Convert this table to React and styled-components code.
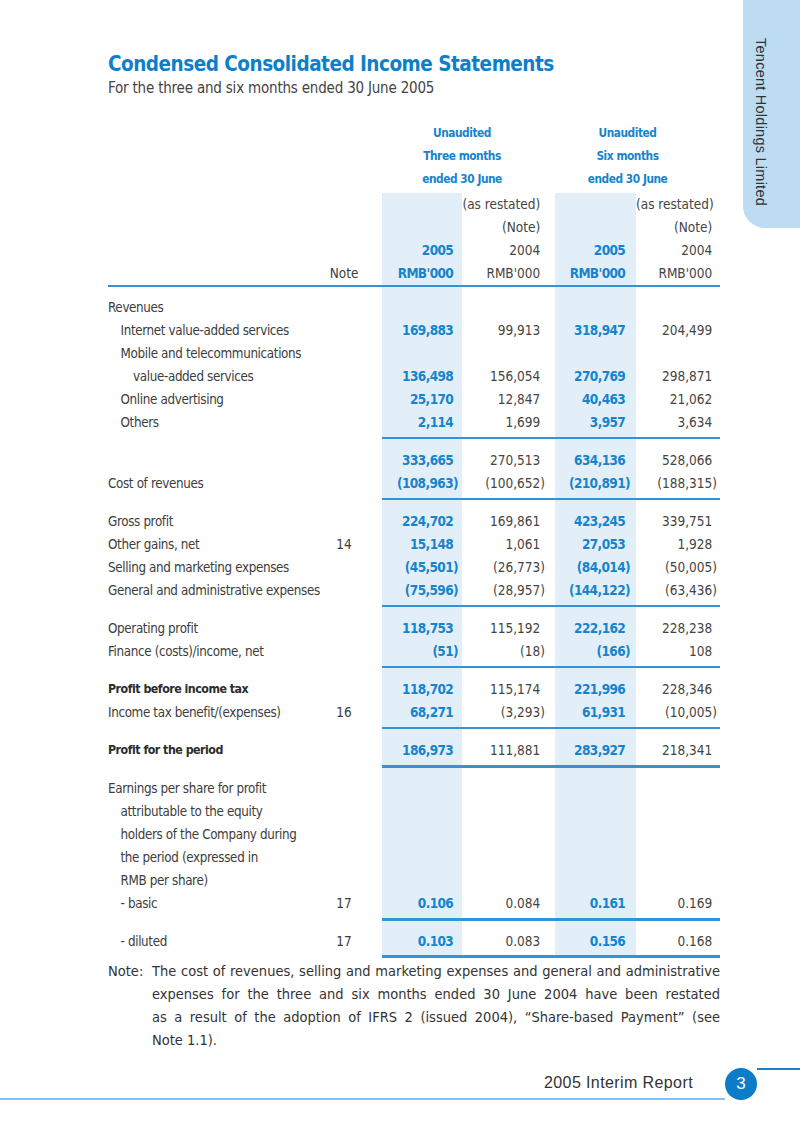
import React from "react";
import styled, { createGlobalStyle } from "styled-components";

const NARROW = `"DejaVu Sans Condensed", "Liberation Sans Narrow", "Liberation Sans", sans-serif`;
const SANS = `"Liberation Sans", Arial, sans-serif`;

const BLUE = "#0d7fca";
const NUM_BLUE = "#1684cd";
const SHADE = "#e2eff9";
const RULE = "#3593d4";
const TEXT = "#3d3d3d";

// 각 열의 오른쪽 여백 (괄호 끝 기준)
const COLS = "212px 62px 80px 93px 81px 84px";
const PAD = [0, 0, 4, 10, 6, 3];

const GlobalStyle = createGlobalStyle`
  body {
    margin: 0;
    background: #ffffff;
  }
  #root {
    width: 800px;
  }
`;

const rows = [
  { label: "Revenues" },
  { label: "Internet value-added services", indent: 1, v: ["169,883", "99,913", "318,947", "204,499"] },
  { label: "Mobile and telecommunications", indent: 1 },
  { label: "value-added services", indent: 2, v: ["136,498", "156,054", "270,769", "298,871"] },
  { label: "Online advertising", indent: 1, v: ["25,170", "12,847", "40,463", "21,062"] },
  { label: "Others", indent: 1, v: ["2,114", "1,699", "3,957", "3,634"], rule: "single" },
  { label: "", v: ["333,665", "270,513", "634,136", "528,066"] },
  { label: "Cost of revenues", v: ["(108,963)", "(100,652)", "(210,891)", "(188,315)"], rule: "single" },
  { label: "Gross profit", v: ["224,702", "169,861", "423,245", "339,751"] },
  { label: "Other gains, net", note: "14", v: ["15,148", "1,061", "27,053", "1,928"] },
  { label: "Selling and marketing expenses", v: ["(45,501)", "(26,773)", "(84,014)", "(50,005)"] },
  { label: "General and administrative expenses", v: ["(75,596)", "(28,957)", "(144,122)", "(63,436)"], rule: "single" },
  { label: "Operating profit", v: ["118,753", "115,192", "222,162", "228,238"] },
  { label: "Finance (costs)/income, net", v: ["(51)", "(18)", "(166)", "108"], rule: "single" },
  { label: "Profit before income tax", bold: true, v: ["118,702", "115,174", "221,996", "228,346"] },
  { label: "Income tax benefit/(expenses)", note: "16", v: ["68,271", "(3,293)", "61,931", "(10,005)"], rule: "single" },
  { label: "Profit for the period", bold: true, v: ["186,973", "111,881", "283,927", "218,341"], rule: "double" },
  { label: "Earnings per share for profit" },
  { label: "attributable to the equity", indent: 1 },
  { label: "holders of the Company during", indent: 1 },
  { label: "the period (expressed in", indent: 1 },
  { label: "RMB per share)", indent: 1 },
  { label: "- basic", indent: 1, note: "17", v: ["0.106", "0.084", "0.161", "0.169"], rule: "double" },
  { label: "- diluted", indent: 1, note: "17", v: ["0.103", "0.083", "0.156", "0.168"], rule: "end" },
];

const headRows = [
  { note: "", v: ["", "(as restated)", "", "(as restated)"] },
  { note: "", v: ["", "(Note)", "", "(Note)"] },
  { note: "", v: ["2005", "2004", "2005", "2004"] },
  { note: "Note", v: ["RMB'000", "RMB'000", "RMB'000", "RMB'000"] },
];

const breaks = {
  single: { gap: 3, line: 2, after: 10 },
  double: { gap: 3, line: 3, after: 9 },
  end: { gap: 2, line: 3, after: 0 },
};

const isShaded = (i) => i === 0 || i === 2;

const App = () => {
  return (
    <>
      <GlobalStyle />
      <Page>
        <Top>
          <Main>
            <Title>Condensed Consolidated Income Statements</Title>
            <Subtitle>For the three and six months ended 30 June 2005</Subtitle>

            <Table>
              <SpanBlock>
                {["Unaudited", "Three months", "ended 30 June"].map((t, i) => (
                  <Row key={t}>
                    <Cell />
                    <Cell />
                    <SpanCell $pad={13}>{t}</SpanCell>
                    <SpanCell $pad={20}>{["Unaudited", "Six months", "ended 30 June"][i]}</SpanCell>
                  </Row>
                ))}
              </SpanBlock>

              {headRows.map((r, ri) => (
                <Row key={ri}>
                  <Cell />
                  <NoteCell>{r.note}</NoteCell>
                  {r.v.map((val, i) => (
                    <NumCell key={i} $col={i + 2} $shade={isShaded(i)} $blue={isShaded(i)}>
                      <Num $paren={false}>{val}</Num>
                    </NumCell>
                  ))}
                </Row>
              ))}
              <Row>
                {[0, 1, 2, 3, 4, 5].map((i) => (
                  <BreakCell key={i} $shade={i === 2 || i === 4} $gap={0} $after={9}>
                    <Line $h={2} />
                  </BreakCell>
                ))}
              </Row>

              {rows.map((r, ri) => (
                <React.Fragment key={ri}>
                  <Row>
                    <LabelCell $indent={r.indent || 0} $bold={r.bold}>
                      {r.label}
                    </LabelCell>
                    <NoteCell>{r.note || ""}</NoteCell>
                    {[0, 1, 2, 3].map((i) => {
                      const val = r.v ? r.v[i] : "";
                      return (
                        <NumCell key={i} $col={i + 2} $shade={isShaded(i)} $blue={isShaded(i)}>
                          {val && <Num $paren={val.startsWith("(")}>{val}</Num>}
                        </NumCell>
                      );
                    })}
                  </Row>
                  {r.rule && (
                    <Row>
                      <Cell />
                      <Cell />
                      {[0, 1, 2, 3].map((i) => (
                        <BreakCell
                          key={i}
                          $shade={isShaded(i)}
                          $gap={breaks[r.rule].gap}
                          $after={breaks[r.rule].after}
                        >
                          <Line $h={breaks[r.rule].line} />
                        </BreakCell>
                      ))}
                    </Row>
                  )}
                </React.Fragment>
              ))}
            </Table>

            <NoteBlock>
              <NoteLabel>Note:</NoteLabel>
              <NoteText>
                <NoteLine>
                  The cost of revenues, selling and marketing expenses and general and administrative
                </NoteLine>
                <NoteLine>
                  expenses for the three and six months ended 30 June 2004 have been restated
                </NoteLine>
                <NoteLine>
                  as a result of the adoption of IFRS 2 (issued 2004), “Share-based Payment” (see
                </NoteLine>
                <NoteLine $last>Note 1.1).</NoteLine>
              </NoteText>
            </NoteBlock>
          </Main>

          <Tab>
            <TabText>Tencent Holdings Limited</TabText>
          </Tab>
        </Top>

        <Footer>
          <FooterLeft>
            <FooterText>2005 Interim Report</FooterText>
          </FooterLeft>
          <PageNum>3</PageNum>
          <FooterRight />
        </Footer>
      </Page>
    </>
  );
};

export default App;

// 페이지 레이아웃
const Page = styled.div`
  width: 800px;
  min-height: 1136px;
  display: flex;
  flex-direction: column;
  background: #ffffff;
`;

const Top = styled.div`
  display: flex;
  align-items: flex-start;
`;

const Main = styled.div`
  width: 612px;
  padding: 50px 0 0 108px;
`;

// 제목
const Title = styled.h1`
  margin: 0;
  font-family: ${NARROW};
  font-weight: 700;
  font-size: 20.5px;
  line-height: 28px;
  letter-spacing: -0.5px;
  color: ${BLUE};
`;

const Subtitle = styled.div`
  font-family: ${NARROW};
  font-size: 15px;
  line-height: 20px;
  letter-spacing: -0.2px;
  color: #444444;
`;

// 표
const Table = styled.div`
  margin-top: 23.5px;
  font-family: ${NARROW};
  font-size: 13.3px;
  color: ${TEXT};
`;

const SpanBlock = styled.div`
  padding-bottom: 2px;
`;

const Row = styled.div`
  display: grid;
  grid-template-columns: ${COLS};
  line-height: 23px;
`;

const Cell = styled.div``;

const SpanCell = styled.div`
  grid-column: span 2;
  text-align: center;
  padding-right: ${({ $pad }) => $pad}px;
  font-weight: 700;
  font-size: 11.8px;
  letter-spacing: -0.45px;
  color: ${NUM_BLUE};
  white-space: nowrap;
`;

const LabelCell = styled.div`
  padding-left: ${({ $indent }) => $indent * 12.5}px;
  font-weight: ${({ $bold }) => ($bold ? 700 : 400)};
  font-size: ${({ $bold }) => ($bold ? "12.3px" : "13.3px")};
  letter-spacing: ${({ $bold }) => ($bold ? "-0.5px" : "-0.35px")};
  color: ${({ $bold }) => ($bold ? "#2b2b2b" : TEXT)};
  white-space: nowrap;
`;

const NoteCell = styled.div`
  text-align: center;
  padding-right: 14px;
  font-size: 13.5px;
`;

const NumCell = styled.div`
  text-align: right;
  white-space: nowrap;
  padding-right: ${({ $col }) => PAD[$col]}px;
  background: ${({ $shade }) => ($shade ? SHADE : "transparent")};
  color: ${({ $blue }) => ($blue ? NUM_BLUE : "#444444")};
  font-weight: ${({ $blue }) => ($blue ? 700 : 400)};
  font-size: 13.5px;
  letter-spacing: ${({ $blue }) => ($blue ? "-0.6px" : "0")};
`;

const Num = styled.span`
  padding-right: ${({ $paren }) => ($paren ? "0" : "4.8px")};
`;

const BreakCell = styled.div`
  padding-top: ${({ $gap }) => $gap}px;
  padding-bottom: ${({ $after }) => $after}px;
  background: ${({ $shade }) => ($shade ? SHADE : "transparent")};
`;

const Line = styled.div`
  height: ${({ $h }) => $h}px;
  background: ${RULE};
`;

// 주석
const NoteBlock = styled.div`
  display: flex;
  margin-top: 2px;
  font-family: ${NARROW};
  font-size: 14.5px;
  line-height: 23.3px;
  color: #333333;
`;

const NoteLabel = styled.div`
  width: 44px;
  flex-shrink: 0;
`;

const NoteText = styled.div`
  flex: 1;
  min-width: 0;
`;

const NoteLine = styled.div`
  text-align: ${({ $last }) => ($last ? "left" : "justify")};
  text-align-last: ${({ $last }) => ($last ? "left" : "justify")};
  white-space: nowrap;
`;

// 오른쪽 탭
const Tab = styled.div`
  width: 57px;
  height: 228px;
  margin-left: 23px;
  box-sizing: border-box;
  padding: 38px 0 0 10px;
  background: #bddcf2;
  border-bottom-left-radius: 22px;
  display: flex;
`;

const TabText = styled.div`
  writing-mode: vertical-rl;
  font-family: ${SANS};
  font-size: 14.5px;
  line-height: 16px;
  letter-spacing: 0.25px;
  color: #333333;
`;

// 하단
const Footer = styled.div`
  display: flex;
  height: 32px;
  margin-top: 15px;
`;

const FooterLeft = styled.div`
  flex: 1;
  box-sizing: border-box;
  border-bottom: 2px solid #86c2ea;
  display: flex;
  align-items: center;
  justify-content: flex-end;
  padding-right: 32px;
`;

const FooterText = styled.div`
  font-family: ${SANS};
  font-size: 16px;
  letter-spacing: 0.4px;
  color: #333333;
`;

const PageNum = styled.div`
  width: 32px;
  height: 32px;
  border-radius: 50%;
  background: #0b7cc8;
  color: #ffffff;
  font-family: ${SANS};
  font-size: 17px;
  display: flex;
  align-items: center;
  justify-content: center;
`;

const FooterRight = styled.div`
  width: 43px;
  border-top: 2px solid #1a7fc9;
`;
